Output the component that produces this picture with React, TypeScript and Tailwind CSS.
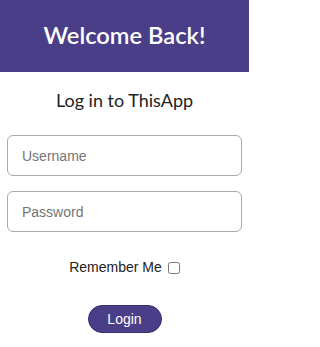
export default function App() {
  return (
    <div className="w-[249px] h-[347px] bg-white flex flex-col">
      <div className="h-[72px] bg-[#4b3e88] flex items-center justify-center">
        <h1 className="text-white text-[23.7px] font-semibold leading-none font-['Lato',sans-serif]">Welcome Back!</h1>
      </div>
      <h2 className="mt-[17px] text-center text-[#222] text-[18px] leading-[22px] font-['Lato',sans-serif]">Log in to ThisApp</h2>
      <div className="mt-[24px] px-[7px] flex flex-col gap-[15px]">
        <input
          placeholder="Username"
          className="h-[41px] w-full rounded-[6px] border border-[#a9a9a9] px-[14px] text-[14px] font-['Liberation_Sans',Arial,sans-serif] placeholder:text-[#757575] outline-none"
        />
        <input
          type="password"
          placeholder="Password"
          className="h-[41px] w-full rounded-[6px] border border-[#a9a9a9] px-[14px] text-[14px] font-['Liberation_Sans',Arial,sans-serif] placeholder:text-[#757575] outline-none"
        />
      </div>
      <label className="mt-[25px] flex items-center justify-center gap-[6px] text-[14px] text-[#222] font-['Liberation_Sans',Arial,sans-serif]">
        Remember Me
        <input type="checkbox" className="w-[12px] h-[12px] m-0" />
      </label>
      <div className="mt-[27px] flex justify-center">
        <button className="w-[74px] h-[28px] rounded-full bg-[#4b3e88] text-white text-[14px] font-['Liberation_Sans',Arial,sans-serif] border border-[#3a3070]">
          Login
        </button>
      </div>
    </div>
  );
}
